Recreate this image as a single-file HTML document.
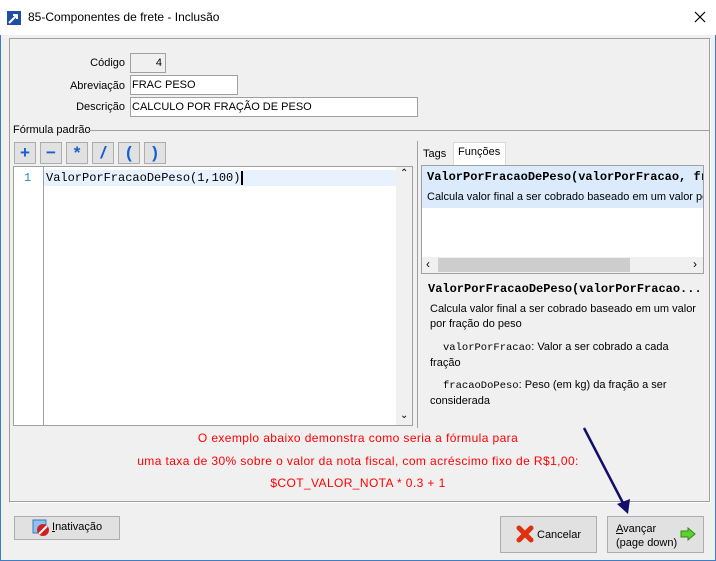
<!DOCTYPE html>
<html><head><meta charset="utf-8"><style>
*{box-sizing:border-box;margin:0;padding:0}
body{width:716px;height:561px;overflow:hidden;background:#f0f0f0;font-family:"Liberation Sans",sans-serif;font-size:11px;color:#000;position:relative}
.a{position:absolute}
.win{left:0;top:0;width:716px;height:561px;border:1px solid #3c7fc8;border-top:none}
.title{left:0;top:0;width:716px;height:35px;background:#fff}
.inp{background:#fff;border:1px solid #a0a0a0;height:20px;line-height:18px;padding-left:1px;font-size:11px}
.lbl{text-align:right;width:100px;left:25px;font-size:11px}
.tb{width:22px;height:22px;border:1px solid #adadad;background:#e1e1e1;color:#1560d0;font-weight:bold;font-size:17px;text-align:center;line-height:19px}
.mono{font-family:"Liberation Mono",monospace}
.red{color:#f00;width:716px;text-align:center;left:0;font-size:12px;letter-spacing:0.4px}
.btn{border:1px solid #adadad;background:#e1e1e1}
</style></head><body>
<div class="a win"></div>
<div class="a title"></div>
<svg class="a" style="left:7px;top:11px" width="14" height="14"><rect width="14" height="14" fill="#1e4fa8"/><path d="M2 12 L10 4 M6 4 H10 V8" stroke="#fff" stroke-width="2" fill="none"/></svg>
<div class="a" style="left:28px;top:10px;font-size:12px">85-Componentes de frete - Inclusão</div>
<svg class="a" style="left:694px;top:11px" width="12" height="12"><path d="M1 1L11 11M11 1L1 11" stroke="#000" stroke-width="1.2"/></svg>
<div class="a" style="left:9px;top:38px;width:702px;height:465px;border:1px solid #a0a0a0;border-right-color:#fff;border-bottom-color:#fff;box-shadow:inset -1px -1px 0 #a0a0a0"></div>
<div class="a lbl" style="top:57px">Código</div>
<div class="a inp" style="left:130px;top:53px;width:36px;background:#f0f0f0;text-align:right;padding-right:3px">4</div>
<div class="a lbl" style="top:80px">Abreviação</div>
<div class="a inp" style="left:130px;top:75px;width:108px">FRAC PESO</div>
<div class="a lbl" style="top:101px">Descrição</div>
<div class="a inp" style="left:130px;top:97px;width:288px">CALCULO POR FRAÇÃO DE PESO</div>
<div class="a" style="left:13px;top:124px">Fórmula padrão</div>
<div class="a" style="left:88px;top:130px;width:622px;height:1px;background:#a0a0a0"></div>
<div class="a tb" style="left:14px;top:142px">+</div>
<div class="a tb" style="left:40px;top:142px">−</div>
<div class="a tb" style="left:66px;top:142px">*</div>
<div class="a tb" style="left:92px;top:142px;font-style:italic">/</div>
<div class="a tb" style="left:118px;top:142px">(</div>
<div class="a tb" style="left:144px;top:142px">)</div>
<div class="a" style="left:13px;top:166px;width:400px;height:260px;background:#fff;border:1px solid #a0a0a0"></div>
<div class="a" style="left:43px;top:167px;width:1px;height:258px;background:#a0a0a0"></div>
<div class="a" style="left:44px;top:170px;width:352px;height:16px;background:#e8f2fe"></div>
<div class="a mono" style="left:24px;top:171px;color:#2a8ab8;font-size:12px">1</div>
<div class="a mono" style="left:46px;top:171px;font-size:12px">ValorPorFracaoDePeso(1,100)<span style="border-left:2px solid #000;margin-left:1px"></span></div>
<div class="a" style="left:396px;top:167px;width:16px;height:258px;background:#f0f0f0"></div>
<div class="a" style="left:400px;top:168px;font-size:10px">⌃</div>
<div class="a" style="left:400px;top:410px;font-size:10px">⌄</div>
<div class="a" style="left:417px;top:141px;width:294px;height:287px;border-left:1px solid #a0a0a0"></div>
<div class="a" style="left:423px;top:148px;font-size:11px">Tags</div>
<div class="a" style="left:453px;top:142px;width:53px;height:23px;background:#fff;border:1px solid #d9d9d9;border-bottom:none;padding:3px 0 0 4px">Funções</div>
<div class="a" style="left:421px;top:165px;width:283px;height:109px;background:#fff;border:1px solid #a0a0a0"></div>
<div class="a" style="left:422px;top:166px;width:281px;height:42px;background:#dcebfc;overflow:hidden;white-space:nowrap">
<div class="mono" style="font-weight:bold;font-size:12px;padding:4px 0 0 5px">ValorPorFracaoDePeso(valorPorFracao, fra</div>
<div style="padding:7px 0 0 5px">Calcula valor final a ser cobrado baseado em um valor por</div></div>
<div class="a" style="left:422px;top:257px;width:281px;height:16px;background:#f0f0f0"></div>
<div class="a" style="left:438px;top:258px;width:192px;height:14px;background:#cdcdcd"></div>
<div class="a" style="left:426px;top:257px;font-size:12px">‹</div>
<div class="a" style="left:693px;top:257px;font-size:12px">›</div>
<div class="a mono" style="left:428px;top:282px;font-weight:bold;font-size:12px">ValorPorFracaoDePeso(valorPorFracao...</div>
<div class="a" style="left:430px;top:302px;width:275px;line-height:15px">Calcula valor final a ser cobrado baseado em um valor por fração do peso</div>
<div class="a" style="left:430px;top:340px;width:250px;line-height:15px"><span class="mono" style="margin-left:13px;font-size:10.5px">valorPorFracao</span>: Valor a ser cobrado a cada fração</div>
<div class="a" style="left:430px;top:378px;width:275px;line-height:15px"><span class="mono" style="margin-left:13px;font-size:10.5px">fracaoDoPeso</span>: Peso (em kg) da fração a ser considerada</div>
<div class="a red" style="top:431px">O exemplo abaixo demonstra como seria a fórmula para</div>
<div class="a red" style="top:454px">uma taxa de 30% sobre o valor da nota fiscal, com acréscimo fixo de R$1,00:</div>
<div class="a red" style="top:476px">$COT_VALOR_NOTA * 0.3 + 1</div>
<div class="a btn" style="left:14px;top:516px;width:106px;height:24px"></div>
<svg class="a" style="left:32px;top:519px" width="18" height="18"><rect x="1" y="1" width="13" height="13" fill="#8fc0f0" stroke="#3a78c0"/><circle cx="11" cy="11" r="6" fill="#d02020"/><path d="M7 15L15 7" stroke="#fff" stroke-width="2"/></svg>
<div class="a" style="left:52px;top:521px"><u>I</u>nativação</div>
<div class="a btn" style="left:500px;top:516px;width:97px;height:37px"></div>
<svg class="a" style="left:516px;top:525px" width="18" height="18"><path d="M3 3L15 15M15 3L3 15" stroke="#e03010" stroke-width="5" stroke-linecap="round"/></svg>
<div class="a" style="left:537px;top:529px">Cancelar</div>
<div class="a btn" style="left:607px;top:516px;width:97px;height:37px"></div>
<div class="a" style="left:616px;top:522px;line-height:14px"><u>A</u>vançar<br>(page down)</div>
<svg class="a" style="left:680px;top:527px" width="16" height="14"><path d="M1 4H8V1L15 7L8 13V10H1Z" fill="#5ed030" stroke="#2f8a18"/></svg>
<svg class="a" style="left:0;top:0" width="716" height="561"><path d="M584 428L624 505" stroke="#10106a" stroke-width="2.5"/><path d="M617 504L628 514L630 499Z" fill="#10106a"/></svg>
</body></html>
